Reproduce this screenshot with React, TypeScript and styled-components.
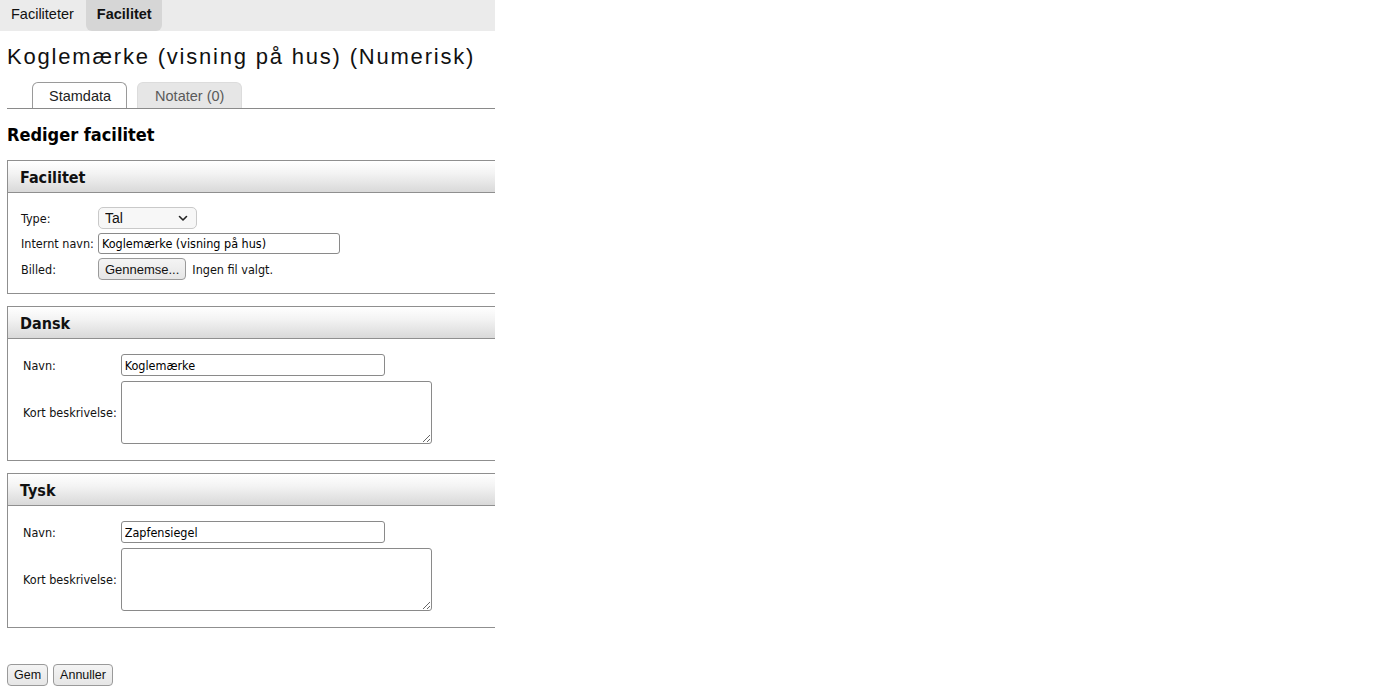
import React from "react";
import styled, { createGlobalStyle } from "styled-components";

const GlobalStyle = createGlobalStyle`
  html, body {
    margin: 0;
    padding: 0;
    background: #ffffff;
  }
  body {
    font-family: "DejaVu Sans Condensed", "DejaVu Sans", sans-serif;
    color: #000;
  }
`;

const Page = styled.div`
  width: 495px;
  overflow: hidden;
`;

const TopNav = styled.nav`
  display: flex;
  height: 31px;
  background: #ebebeb;
`;

const NavItem = styled.a<{ $active?: boolean }>`
  display: block;
  padding: ${(p) => (p.$active ? "0 10px 0 11px" : "0 12px 0 11px")};
  line-height: 29px;
  font-family: "Liberation Sans", Arial, sans-serif;
  font-size: 14.5px;
  color: #111;
  text-decoration: none;
  font-weight: ${(p) => (p.$active ? 700 : 400)};
  background: ${(p) => (p.$active ? "#d6d6d6" : "transparent")};
  border-radius: 0 0 6px 6px;
`;

const Content = styled.main`
  padding: 0 0 40px 7px;
`;

const Title = styled.h1`
  margin: 13px 0 0;
  font-family: "Liberation Sans", Arial, sans-serif;
  font-size: 22px;
  font-weight: 400;
  letter-spacing: 1.8px;
  line-height: 26px;
  color: #111;
`;

const TabBar = styled.div`
  display: flex;
  gap: 10px;
  margin-top: 12px;
  padding-left: 25px;
  border-bottom: 1px solid #8a8a8a;
`;

const Tab = styled.div<{ $active?: boolean }>`
  height: 25px;
  line-height: 27px;
  padding: ${(p) => (p.$active ? "0 15px 0 16px" : "0 17px")};
  font-family: "Liberation Sans", Arial, sans-serif;
  font-size: 14.5px;
  color: ${(p) => (p.$active ? "#222" : "#5a5a5a")};
  background: ${(p) => (p.$active ? "#ffffff" : "#e6e6e6")};
  border: 1px solid ${(p) => (p.$active ? "#9a9a9a" : "#dcdcdc")};
  border-bottom: none;
  border-radius: 6px 6px 0 0;
  margin-bottom: ${(p) => (p.$active ? "-1px" : "0")};
`;

const Heading = styled.h2`
  margin: 15px 0 14px;
  font-size: 18px;
  font-weight: 700;
  line-height: 22px;
`;

const Fieldset = styled.section`
  border: 1px solid #8f8f8f;
  border-right: none;
  margin-bottom: 12px;
`;

const Legend = styled.div`
  height: 31px;
  line-height: 33px;
  padding-left: 12px;
  font-size: 16px;
  font-weight: 700;
  color: #111;
  background: linear-gradient(#ffffff 0%, #f3f3f3 40%, #d9d9d9 100%);
  border-bottom: 1px solid #8f8f8f;
`;

const FormGrid = styled.div<{ $pad: number; $gap: number; $rowGap: number; $top: number; $bottom: number }>`
  display: grid;
  grid-template-columns: max-content 1fr;
  align-items: center;
  column-gap: ${(p) => p.$gap}px;
  row-gap: ${(p) => p.$rowGap}px;
  padding: ${(p) => p.$top}px 0 ${(p) => p.$bottom}px ${(p) => p.$pad}px;
  font-size: 12.5px;
`;

const Label = styled.label`
  color: #111;
`;

const Cell = styled.div`
  display: flex;
  align-items: center;
  gap: 6px;
`;

const TextInput = styled.input<{ $w: number; $h: number }>`
  box-sizing: border-box;
  width: ${(p) => p.$w}px;
  height: ${(p) => p.$h}px;
  padding: 0 3px;
  border: 1px solid #8a8a8a;
  border-radius: 3px;
  font-family: "DejaVu Sans Condensed", "DejaVu Sans", sans-serif;
  font-size: 12.5px;
  color: #000;
  background: #fff;
`;

const TextArea = styled.textarea`
  box-sizing: border-box;
  width: 311px;
  height: 63px;
  border: 1px solid #8a8a8a;
  border-radius: 3px;
  display: block;
  resize: both;
`;

const SelectBox = styled.div`
  box-sizing: border-box;
  display: flex;
  align-items: center;
  width: 99px;
  height: 22px;
  padding: 0 8px 0 6px;
  border: 1px solid #c9c9c9;
  border-radius: 5px;
  background: #f7f7f7;
`;

const Select = styled.select`
  flex: 1;
  appearance: none;
  border: none;
  background: transparent;
  padding: 0;
  font-family: "Liberation Sans", Arial, sans-serif;
  font-size: 14px;
  color: #111;
  outline: none;
`;

const Button = styled.button<{ $size?: number }>`
  box-sizing: border-box;
  height: 22px;
  padding: 0 6px;
  border: 1px solid #9a9a9a;
  border-radius: 4px;
  background: linear-gradient(#f4f4f4, #e6e6e6);
  font-family: "Liberation Sans", Arial, sans-serif;
  font-size: ${(p) => p.$size ?? 12.5}px;
  color: #111;
`;

const FileNote = styled.span`
  color: #111;
`;

const Actions = styled.div`
  display: flex;
  gap: 5px;
  margin-top: 36px;
`;

const Chevron = () => (
  <svg width="10" height="7" viewBox="0 0 10 7" fill="none">
    <path d="M1.5 1.5 L5 5 L8.5 1.5" stroke="#222" strokeWidth="1.6" strokeLinecap="round" strokeLinejoin="round" />
  </svg>
);

type LangProps = { title: string; name: string };

const LanguageBlock: React.FC<LangProps> = ({ title, name }) => (
  <Fieldset>
    <Legend>{title}</Legend>
    <FormGrid $pad={15} $gap={4} $rowGap={5} $top={15} $bottom={16}>
      <Label>Navn:</Label>
      <TextInput $w={264} $h={22} defaultValue={name} />
      <Label>Kort beskrivelse:</Label>
      <TextArea />
    </FormGrid>
  </Fieldset>
);

export default function App() {
  return (
    <Page>
      <GlobalStyle />
      <TopNav>
        <NavItem href="#">Faciliteter</NavItem>
        <NavItem href="#" $active>
          Facilitet
        </NavItem>
      </TopNav>
      <Content>
        <Title>Koglemærke (visning på hus) (Numerisk)</Title>
        <TabBar>
          <Tab $active>Stamdata</Tab>
          <Tab>Notater (0)</Tab>
        </TabBar>
        <Heading>Rediger facilitet</Heading>

        <Fieldset>
          <Legend>Facilitet</Legend>
          <FormGrid $pad={13} $gap={4} $rowGap={4} $top={14} $bottom={13}>
            <Label>Type:</Label>
            <Cell>
              <SelectBox>
                <Select defaultValue="tal">
                  <option value="tal">Tal</option>
                  <option value="ja">Ja/Nej</option>
                </Select>
                <Chevron />
              </SelectBox>
            </Cell>
            <Label>Internt navn:</Label>
            <TextInput $w={242} $h={21} defaultValue="Koglemærke (visning på hus)" />
            <Label>Billed:</Label>
            <Cell>
              <Button type="button" $size={13}>Gennemse...</Button>
              <FileNote>Ingen fil valgt.</FileNote>
            </Cell>
          </FormGrid>
        </Fieldset>

        <LanguageBlock title="Dansk" name="Koglemærke" />
        <LanguageBlock title="Tysk" name="Zapfensiegel" />

        <Actions>
          <Button type="button">Gem</Button>
          <Button type="button">Annuller</Button>
        </Actions>
      </Content>
    </Page>
  );
}
